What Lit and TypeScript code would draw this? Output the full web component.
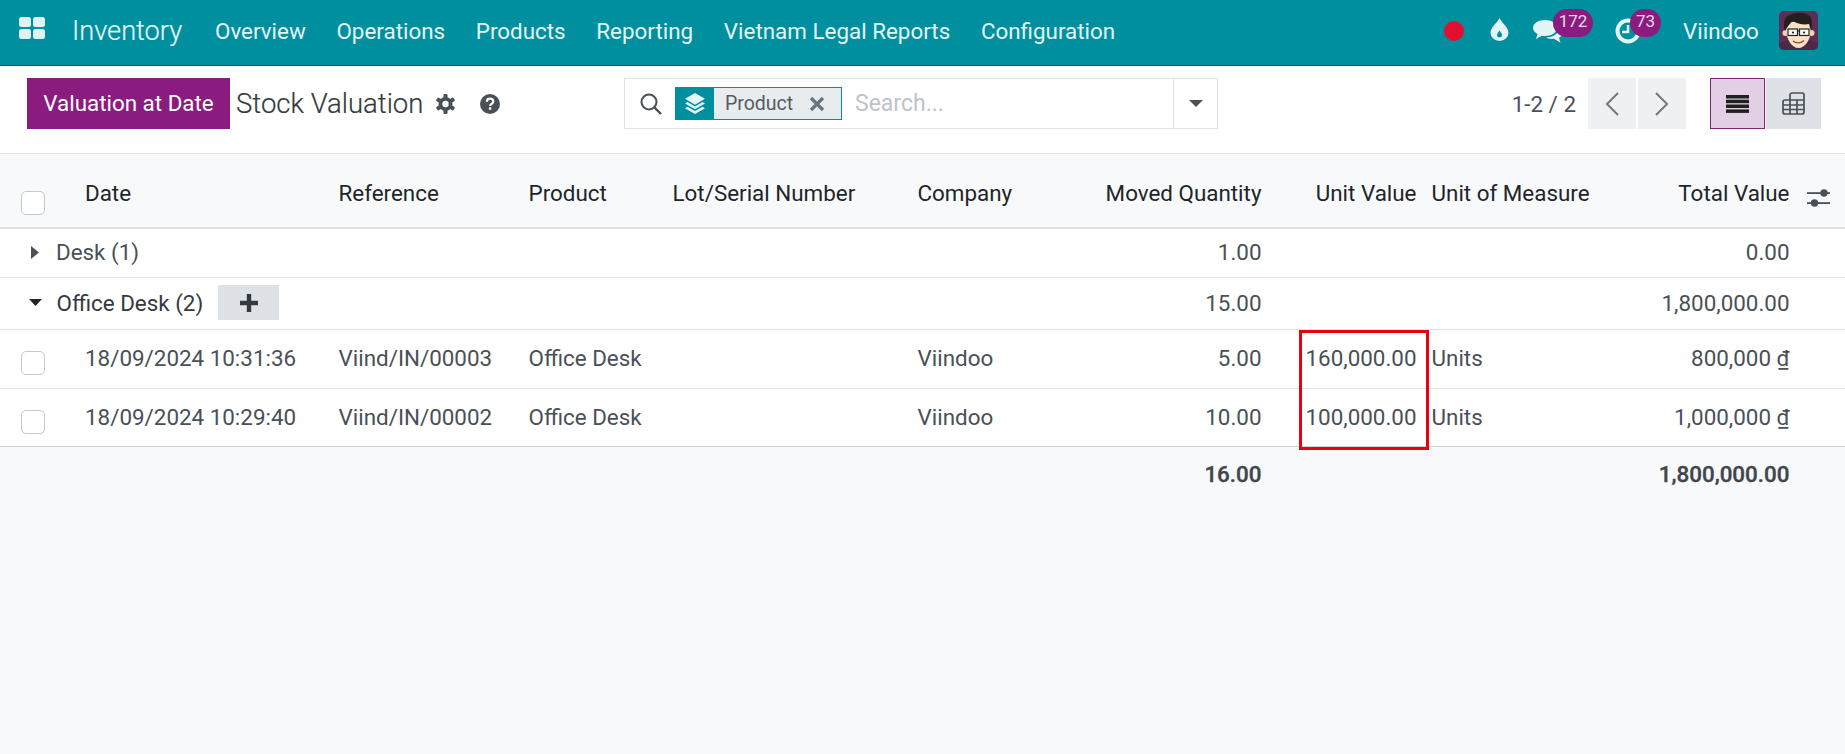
import { LitElement, html, css, svg } from "lit";
import { customElement } from "lit/decorators.js";

const MENU = ["Overview", "Operations", "Products", "Reporting", "Vietnam Legal Reports", "Configuration"];

const check = html`<span class="cb"></span>`;

@customElement("app-root")
export class AppRoot extends LitElement {
  static styles = css`
    :host { display: block; min-height: 754px; height: 754px; overflow: hidden; background: #f8f9fa; font-family: Roboto, "Liberation Sans", sans-serif; font-size: 22.4px; color: #495057; }
    svg { display: block; flex: none; }
    .nav { display: flex; align-items: center; height: 61px; padding-bottom: 4px; border-bottom: 1px solid #00616b; background: #008f9e; color: #e4f5f7; box-sizing: content-box; }
    .apps { margin-left: 19px; margin-top: -5px; }
    .brand { margin-left: 27px; font-size: 27.2px; font-weight: 300; -webkit-text-stroke: 0.2px #e4f5f7; width: 128px; }
    .menu { display: flex; gap: 30.7px; padding-left: 15px; }
    .nav-right { margin-left: auto; display: flex; align-items: center; position: relative; height: 61px; }
    .dot { width: 20px; height: 20px; border-radius: 50%; background: #e30f30; margin-top: 1px; }
    .ic { position: relative; }
    .drop { margin-left: 26px; margin-top: -3px; }
    .chat { margin-left: 24px; width: 30px; }
    .clock { margin-left: 52px; width: 26px; }
    .badge { position: absolute; background: #8a1c80; color: #ecd9ea; font-size: 17px; border-radius: 14px; height: 28px; line-height: 24px; text-align: center; }
    .b1 { left: 20px; top: -10px; width: 40px; }
    .b2 { left: 15px; top: -9px; width: 31px; }
    .user { margin-left: 42px; width: 96px; font-size: 22.4px; }
    .avatar { margin-right: 27px; border-radius: 5px; overflow: hidden; }

    .cp { display: flex; align-items: flex-start; box-sizing: border-box; height: 88px; padding: 12px 0 0 27px; background: #fff; border-bottom: 1px solid #dee2e6; }
    .left { display: flex; align-items: center; width: 597px; height: 51px; }
    .main-btn { box-sizing: border-box; width: 203px; height: 51px; padding-bottom: 2px; background: #8a1c80; color: #fff; font-size: 22.4px; display: flex; align-items: center; justify-content: center; }
    .title { margin-left: 6px; font-size: 27.5px; font-weight: 300; color: #343a40; -webkit-text-stroke: 0.2px #343a40; width: 200px; white-space: nowrap; }
    .help { margin-left: 25px; }
    .search { display: flex; align-items: center; width: 594px; height: 51px; box-sizing: border-box; border: 1px solid #dee2e6; }
    .s-ic { margin-left: 15px; }
    .facet { display: flex; align-items: center; margin-left: 13px; width: 167px; height: 33px; box-sizing: border-box; border: 1px solid #008f9e; background: #e9ecef; color: #555c63; font-size: 19.5px; }
    .f-ic { width: 38px; height: 31px; background: #008f9e; display: flex; align-items: center; justify-content: center; }
    .f-tx { margin-left: 11px; width: 84px; }
    .ph { margin-left: 13px; color: #bfc3c9; font-size: 23px; flex: 1; }
    .s-caret { width: 43px; height: 49px; border-left: 1px solid #dee2e6; display: flex; align-items: center; justify-content: center; }
    .right { flex: 1; display: flex; align-items: center; justify-content: flex-end; padding-right: 24px; height: 51px; }
    .pager { margin-right: 12px; font-size: 22.4px; }
    .pbtn { width: 48px; height: 51px; background: #eff0f2; display: flex; align-items: center; justify-content: center; margin-right: 2px; }
    .vbtn { width: 55px; height: 51px; display: flex; align-items: center; justify-content: center; box-sizing: border-box; background: #dee2e6; }
    .vbtn.on { background: #e3cfe5; border: 1px solid #7a2a73; margin-left: 22px; margin-right: 1px; }

    .wrap { position: relative; }
    table { border-collapse: separate; border-spacing: 0; table-layout: fixed; width: 1845px; font-size: 22.4px; }
    th { font-weight: 400; color: #212529; height: 75px; padding: 5px 7.5px 0; box-sizing: border-box; border-bottom: 2px solid #dee2e6; text-align: left; white-space: nowrap; }
    td { padding: 0 7.5px 2px; box-sizing: border-box; border-bottom: 1px solid #dee2e6; white-space: nowrap; }
    .r { text-align: right; }
    tbody tr { background: #fff; }
    .g1 td { height: 49px; }
    .g2 td { height: 52px; color: #495057; }
    .d1 td { height: 59px; }
    .d2 td { height: 58px; border-bottom-color: #ced4da; }
    tfoot td { height: 56px; border-bottom: 0; font-weight: 500; color: #3f464c; -webkit-text-stroke: 0.35px #3f464c; }
    td.cc { padding: 8px 0 0 21px; }
    th.cc { padding: 25px 0 0 21px; }
    td.gc { padding: 0 0 2px 0; }
    .cb { display: block; width: 24px; height: 24px; box-sizing: border-box; border: 1px solid #c4c9ce; border-radius: 5px; background: #fff; }
    .gname { display: flex; align-items: center; }
    .gl1 { margin-left: 17px; }
    .gl2 { margin-left: 14.5px; }
    .car1 { margin-left: 31px; }
    .car2 { margin-left: 29px; }
    .dark { color: #343a40; }
    .add { width: 61px; height: 35px; margin-left: 15px; background: #dee2e6; display: flex; align-items: center; justify-content: center; }
    th.opt { padding: 14px 0 0 10px; }
    .highlight { position: absolute; left: 1299px; top: 176px; width: 130px; height: 120px; box-sizing: border-box; border: 3px solid #e60012; pointer-events: none; }
  `;

  private avatar() {
    return svg`<svg class="avatar" width="39" height="39" viewBox="0 0 39 39">
      <rect width="39" height="39" fill="#5c2d57"/>
      <path d="M0 39V32l10-3h19l10 3v7z" fill="#4a2a48"/>
      <circle cx="6.500" cy="22" r="3" fill="#f3cfae"/><circle cx="32.500" cy="22" r="3" fill="#f3cfae"/>
      <path d="M7 17c0 12 6 20 12.500 20S32 29 32 17V11H7z" fill="#fbe0c4"/>
      <path d="M6 20C3 11 6 5 11 4c5-3 14-3 18 0 4 1 5 9 3 16l-2-7c-5 1-12 0-16-3-3 2-5 5-8 10z" fill="#23211f"/>
      <rect x="9" y="18" width="9.500" height="6.500" fill="#f4f7f7" stroke="#222" stroke-width="1.200"/>
      <rect x="20.500" y="18" width="9.500" height="6.500" fill="#f4f7f7" stroke="#222" stroke-width="1.200"/>
      <path d="M18.500 20h2" stroke="#222" stroke-width="1.200"/>
      <circle cx="14" cy="21.500" r="1.100" fill="#222"/><circle cx="25" cy="21.500" r="1.100" fill="#222"/>
      <path d="M14 30c3 2.500 8 2.500 11-.5" stroke="#8a4a30" stroke-width="1.300" fill="none"/>
    </svg>`;
  }

  render() {
    return html`
      <div class="nav">
        <svg class="apps" width="26" height="22" viewBox="0 0 26 22" fill="#dff2f4">
          <rect x="0" y="0" width="12" height="10" rx="2.5"/><rect x="14" y="0" width="12" height="10" rx="2.5"/>
          <rect x="0" y="12" width="12" height="10" rx="2.5"/><rect x="14" y="12" width="12" height="10" rx="2.5"/>
        </svg>
        <div class="brand">Inventory</div>
        <div class="menu">${MENU.map((m) => html`<span>${m}</span>`)}</div>
        <div class="nav-right">
          <span class="dot"></span>
          <svg class="drop" width="19" height="23" viewBox="0 0 19 22" preserveAspectRatio="none">
            <path d="M9.5 0C12 5 18.5 9 18.5 14a9 8 0 0 1-18 0C.5 9 7 5 9.5 0z" fill="#e4f5f7"/>
            <path d="M9.5 12c1 1.600 2.500 2.600 2.500 4a2.500 2.500 0 0 1-5 0c0-1.400 1.500-2.400 2.500-4z" fill="#008f9e"/>
          </svg>
          <span class="ic chat">
            <svg width="30" height="24" viewBox="0 0 30 24" fill="#e4f5f7">
              <path d="M12 1c6.600 0 12 3.400 12 8s-5.400 8-12 8c-1 0-2-.1-3-.3L3 20l1.500-5C2 13.500 0 11.500 0 9c0-4.600 5.400-8 12-8z"/>
              <path d="M26 9c2.400 1.400 3.500 3 3.500 5 0 2-1.300 3.700-3.500 4.800l1.500 5-6.500-4c-3 .3-6 0-8-1.300 7 0 13-4 13-9.500z"/>
            </svg>
            <span class="badge b1">172</span>
          </span>
          <span class="ic clock">
            <svg width="26" height="26" viewBox="0 0 26 26" fill="none" stroke="#e4f5f7">
              <circle cx="13" cy="13" r="10.500" stroke-width="4"/>
              <path d="M13 7v7H7" stroke-width="2.500"/>
            </svg>
            <span class="badge b2">73</span>
          </span>
          <span class="user">Viindoo</span>
          ${this.avatar()}
        </div>
      </div>

      <div class="cp">
        <div class="left">
          <div class="main-btn">Valuation at Date</div>
          <div class="title">Stock Valuation</div>
          <svg width="19" height="20" viewBox="0 0 19 20">
            <g fill="#495057">
              <circle cx="9.500" cy="10" r="7"/>
              <rect x="7.500" y="0" width="4" height="20" rx="1"/>
              <rect x="7.500" y="0" width="4" height="20" rx="1" transform="rotate(60 9.500 10)"/>
              <rect x="7.500" y="0" width="4" height="20" rx="1" transform="rotate(120 9.500 10)"/>
            </g>
            <circle cx="9.500" cy="10" r="3.200" fill="#fff"/>
          </svg>
          <svg class="help" width="20" height="20" viewBox="0 0 20 20">
            <circle cx="10" cy="10" r="10" fill="#495057"/>
            <path d="M6.800 7.800c0-2 1.500-3.200 3.300-3.200 1.900 0 3.200 1.200 3.200 2.800 0 2.500-3.200 2.500-3.200 4.600" fill="none" stroke="#fff" stroke-width="2.200"/>
            <rect x="8.900" y="13.300" width="2.400" height="2.400" fill="#fff"/>
          </svg>
        </div>
        <div class="search">
          <svg class="s-ic" width="22" height="22" viewBox="0 0 22 22" fill="none" stroke="#495057">
            <circle cx="9" cy="9" r="7.500" stroke-width="2"/><path d="M14.500 14.500L21 21" stroke-width="2.400"/>
          </svg>
          <div class="facet">
            <span class="f-ic">
              <svg width="20" height="21" viewBox="0 0 18 18" preserveAspectRatio="none" fill="#e4f5f7">
                <path d="M9 0l9 5-9 5-9-5z"/>
                <path d="M0 9l2.200-1.200L9 11.500l6.800-3.700L18 9l-9 5z"/>
                <path d="M0 13l2.200-1.200L9 15.500l6.800-3.700L18 13l-9 5z"/>
              </svg>
            </span>
            <span class="f-tx">Product</span>
            <svg width="16" height="16" viewBox="0 0 16 16" stroke="#6c757d" stroke-width="3.200"><path d="M2 2l12 12M14 2L2 14"/></svg>
          </div>
          <span class="ph">Search...</span>
          <span class="s-caret">
            <svg width="14" height="7" viewBox="0 0 14 7" fill="#495057"><path d="M0 0h14L7 7z"/></svg>
          </span>
        </div>
        <div class="right">
          <span class="pager">1-2 / 2</span>
          <span class="pbtn"><svg width="14" height="24" viewBox="0 0 14 24" fill="none" stroke="#777" stroke-width="2"><path d="M13 1L2 12l11 11"/></svg></span>
          <span class="pbtn"><svg width="14" height="24" viewBox="0 0 14 24" fill="none" stroke="#777" stroke-width="2"><path d="M1 1l11 11L1 23"/></svg></span>
          <span class="vbtn on">
            <svg width="23" height="18" viewBox="0 0 23 18" fill="#1f1f1f"><rect width="23" height="3.500"/><rect y="4.700" width="23" height="3.500"/><rect y="9.500" width="23" height="3.500"/><rect y="14.400" width="23" height="3.500"/></svg>
          </span>
          <span class="vbtn">
            <svg width="23" height="23" viewBox="0 0 23 23" fill="none" stroke="#495057" stroke-width="1.700">
              <path d="M8 8V3a2 2 0 0 1 2-2h10a2 2 0 0 1 2 2v17a2 2 0 0 1-2 2H3a2 2 0 0 1-2-2V10a2 2 0 0 1 2-2h19M1 13h21M1 17.500h21M8 8v14M15 8v14"/>
            </svg>
          </span>
        </div>
      </div>

      <div class="wrap">
        <table>
          <colgroup>
            <col style="width:77.5px"/><col style="width:253.5px"/><col style="width:190px"/><col style="width:144px"/><col style="width:245px"/><col style="width:150px"/><col style="width:209px"/><col style="width:155px"/><col style="width:200px"/><col style="width:173px"/><col style="width:48px"/>
          </colgroup>
          <thead>
            <tr>
              <th class="cc">${check}</th>
              <th>Date</th><th>Reference</th><th>Product</th><th>Lot/Serial Number</th><th>Company</th>
              <th class="r">Moved Quantity</th><th class="r">Unit Value</th><th>Unit of Measure</th><th class="r">Total Value</th>
              <th class="opt">
                <svg width="23" height="18" viewBox="0 0 23 18" fill="#495057">
                  <rect y="3.200" width="23" height="1.800"/><circle cx="17" cy="4" r="3.700"/>
                  <rect y="13.200" width="23" height="1.800"/><circle cx="7.500" cy="14" r="3.700"/>
                </svg>
              </th>
            </tr>
          </thead>
          <tbody>
            <tr class="g1">
              <td colspan="6" class="gc"><div class="gname"><svg class="car1" width="8" height="13" viewBox="0 0 8 13" fill="#495057"><path d="M0 0l8 6.500L0 13z"/></svg><span class="gl1">Desk (1)</span></div></td>
              <td class="r">1.00</td><td></td><td></td><td class="r">0.00</td><td></td>
            </tr>
            <tr class="g2">
              <td colspan="6" class="gc"><div class="gname dark"><svg class="car2" width="13" height="7" viewBox="0 0 13 7" fill="#212529"><path d="M0 0h13L6.500 7z"/></svg><span class="gl2">Office Desk (2)</span><span class="add"><svg width="18" height="18" viewBox="0 0 18 18" fill="#343a40"><path d="M6.800 0h4.400v6.800H18v4.400h-6.800V18H6.800v-6.800H0V6.800h6.800z"/></svg></span></div></td>
              <td class="r">15.00</td><td></td><td></td><td class="r">1,800,000.00</td><td></td>
            </tr>
            <tr class="d1">
              <td class="cc">${check}</td><td>18/09/2024 10:31:36</td><td>Viind/IN/00003</td><td>Office Desk</td><td></td><td>Viindoo</td>
              <td class="r">5.00</td><td class="r">160,000.00</td><td>Units</td><td class="r">800,000 ₫</td><td></td>
            </tr>
            <tr class="d2">
              <td class="cc">${check}</td><td>18/09/2024 10:29:40</td><td>Viind/IN/00002</td><td>Office Desk</td><td></td><td>Viindoo</td>
              <td class="r">10.00</td><td class="r">100,000.00</td><td>Units</td><td class="r">1,000,000 ₫</td><td></td>
            </tr>
          </tbody>
          <tfoot>
            <tr>
              <td colspan="6"></td><td class="r">16.00</td><td></td><td></td><td class="r">1,800,000.00</td><td></td>
            </tr>
          </tfoot>
        </table>
        <div class="highlight"></div>
      </div>
    `;
  }
}
